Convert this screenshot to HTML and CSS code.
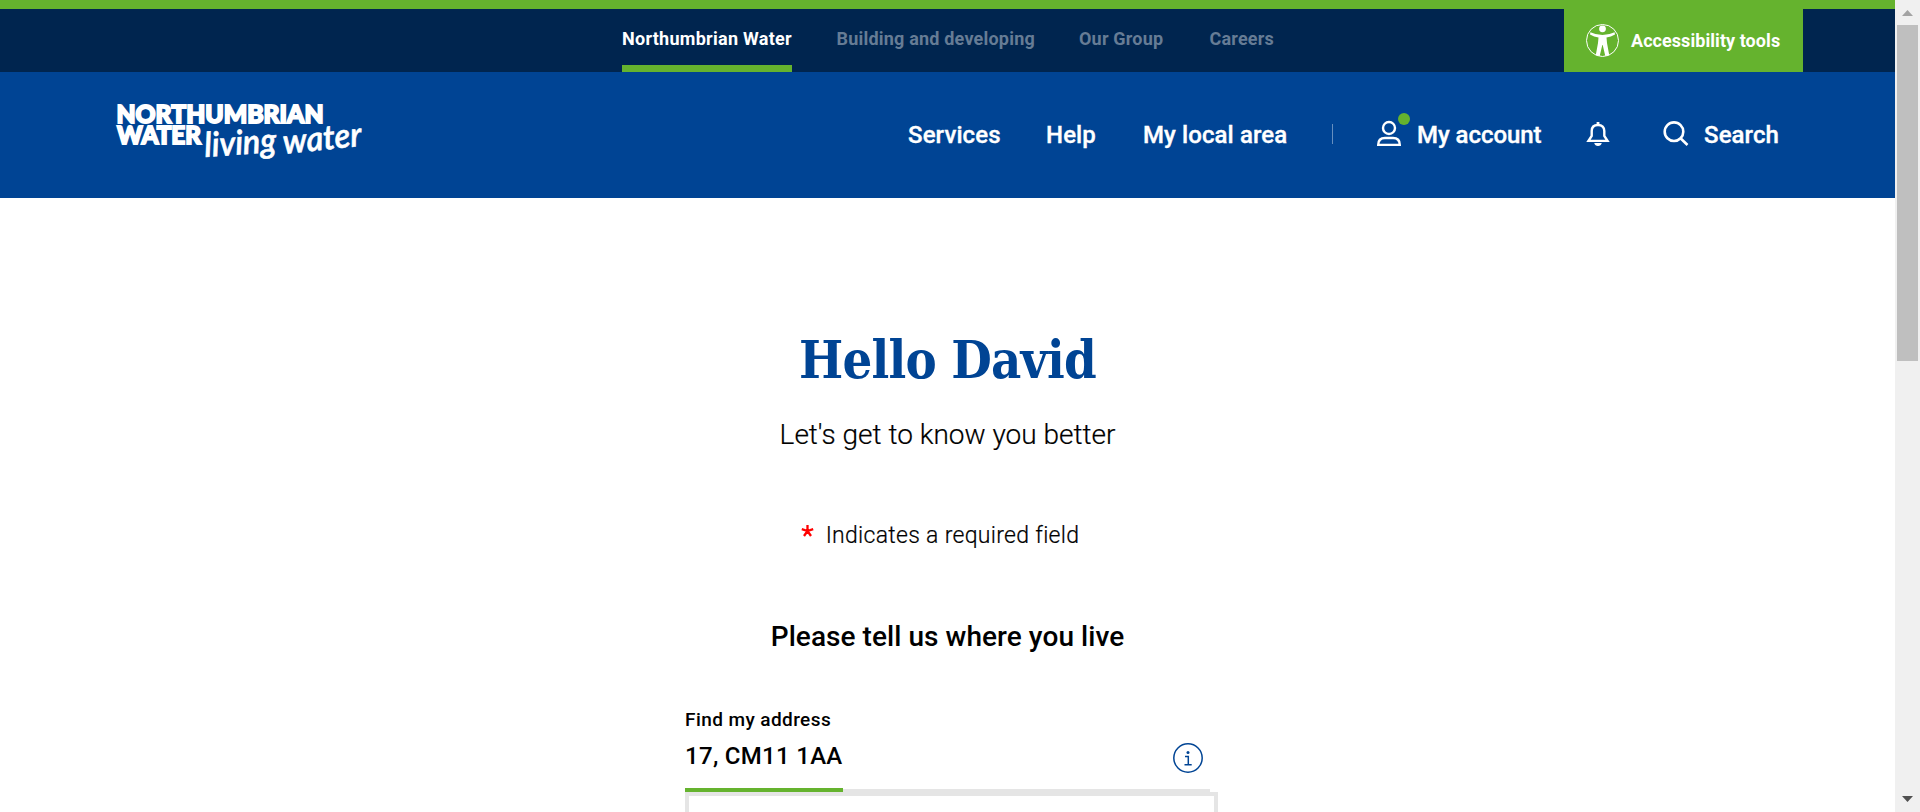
FILE: index.html
```html
<!DOCTYPE html>
<html lang="en">
<head>
<meta charset="utf-8">
<title>Northumbrian Water</title>
<link rel="stylesheet" href="styles.css">
</head>
<body>
<div class="page">
  <header>
    <div class="topbar">
      <nav class="sites">
        <a class="site active">Northumbrian Water</a>
        <a class="site">Building and developing</a>
        <a class="site">Our Group</a>
        <a class="site">Careers</a>
      </nav>
      <a class="access">
        <svg width="33" height="33" viewBox="0 0 33 33"><circle cx="16.5" cy="16.5" r="16" fill="none" stroke="#fff"/><circle cx="16.5" cy="4.8" r="3.4" fill="#fff"/><path fill="#fff" d="M4.4 8.3Q10 11 16.500 11T28.600 8.300L29 10.600Q25 13 20.500 13.500L21 19L23.200 31L19.300 32L16.700 21H16.300L13.700 32L9.800 31L12 19L12.500 13.500Q8 13 4 10.600Z"/></svg>
        <span>Accessibility tools</span>
      </a>
    </div>
    <div class="mainbar">
      <svg class="logo" width="252" height="66" viewBox="0 0 252 66">
        <g fill="#fff" stroke="#fff">
          <text class="mark" x="1.500" y="20" textLength="207" lengthAdjust="spacingAndGlyphs">NORTHUMBRIAN</text>
          <text class="mark" x="2" y="40.500" textLength="84" lengthAdjust="spacingAndGlyphs">WATER</text>
          <text class="script" x="90" y="54" textLength="72" lengthAdjust="spacingAndGlyphs" transform="rotate(-4 90 54)">living</text>
          <text class="script" x="169" y="51" textLength="79" lengthAdjust="spacingAndGlyphs" transform="rotate(-6 169 51)">water</text>
        </g>
      </svg>
      <nav class="menu">
        <a class="m1">Services</a>
        <a class="m2">Help</a>
        <a class="m3">My local area</a>
        <i class="rule"></i>
        <a class="account">
          <svg width="36" height="34" viewBox="0 0 36 34" fill="none" stroke="#fff" stroke-width="2.4"><circle cx="13" cy="16" r="6"/><path d="M2.200 32.900Q2.200 26 9 26H17Q23.800 26 23.800 32.900Z"/><circle cx="28" cy="7" r="6" fill="#65b32e" stroke="none"/></svg>
          <span>My account</span>
        </a>
        <svg class="bell" width="22" height="24" viewBox="0 0 22 24" fill="none" stroke="#fff" stroke-width="2.400"><path d="M1.500 18.900H20.500L17.300 14V9Q17.300 3 11 3T4.700 9V14Z"/><path fill="#fff" stroke="none" d="M9.600 0H12.400V3H9.600ZM7.200 21H14.800Q14 24 11 24T7.200 21Z"/></svg>
        <svg class="lens" width="25" height="25" viewBox="0 0 25 25" fill="none" stroke="#fff" stroke-width="2.600"><circle cx="11" cy="10.700" r="9.300"/><path d="M17.500 17.300L24.500 24"/></svg>
        <a>Search</a>
      </nav>
    </div>
  </header>
  <main>
    <h1>Hello David</h1>
    <p class="lead">Let's get to know you better</p>
    <p class="required"><svg width="13" height="12" viewBox="0 0 13 12" stroke="red" stroke-width="2.300"><path d="M6.500 6V0M6.500 6L.8 4.100M6.500 6L12.200 4.100M6.500 6L3 11M6.500 6L10 11"/></svg><span>Indicates a required field</span></p>
    <h2>Please tell us where you live</h2>
    <div class="field">
      <label>Find my address</label>
      <div class="row">
        <div class="value">17, CM11 1AA</div>
        <svg class="info" width="30" height="30" viewBox="0 0 30 30" fill="none" stroke="#004494" stroke-width="1.500"><circle cx="15" cy="15" r="14.200"/><path d="M12 13.500H15.300V21.500M11.500 21.800H18.700"/><circle cx="15" cy="9.500" r="1.500" fill="#004494" stroke="none"/></svg>
      </div>
      <div class="track"><i></i></div>
      <div class="results"></div>
    </div>
  </main>
</div>
<aside class="scrollbar">
  <svg width="11" height="6" viewBox="0 0 11 6"><path fill="#a3a3a3" d="M0 6L5.500 0L11 6Z"/></svg>
  <div class="thumb"></div>
  <svg class="down" width="11" height="6" viewBox="0 0 11 6"><path fill="#505050" d="M0 0L5.500 6L11 0Z"/></svg>
</aside>
</body>
</html>
```
FILE: styles.css
```css
* { box-sizing: border-box; }
body { margin: 0; height: 812px; overflow: hidden; display: flex; background: #fff; color: #000; font-family: Roboto, "Noto Sans", sans-serif; }
a, span, label { white-space: nowrap; }
svg { display: block; flex: none; overflow: visible; }
.page { width: 1895px; height: 812px; overflow: hidden; }
.topbar { height: 72px; border-top: 9px solid #65b32e; background: #00254f; display: flex; justify-content: space-between; padding: 0 92px 0 622px; }
.sites { display: flex; gap: 44.5px; font-size: 18px; font-weight: 700; line-height: 59px; letter-spacing: .2px; color: #667c95; }
.site { height: 63px; }
.site:nth-child(1) { width: 170px; letter-spacing: .28px; }
.site:nth-child(2) { width: 198px; }
.site:nth-child(3) { width: 86px; }
.active { color: #fff; border-bottom: 7px solid #65b32e; }
.access { width: 239px; background: #65b32e; color: #fff; display: flex; gap: 12px; padding: 15px 0 0 22px; font-size: 18px; font-weight: 700; line-height: 34px; letter-spacing: .06px; }
.mainbar { height: 126px; background: #004494; display: flex; padding-left: 115px; color: #fff; }
.logo { margin-top: 31px; }
.mark { font: 900 24.5px Lato, sans-serif; stroke-width: 1.8px; }
.script { font: italic 600 34px Lato, sans-serif; stroke-width: .6px; }
.menu { display: flex; margin-left: 541px; font-size: 24px; font-weight: 500; line-height: 28px; letter-spacing: .1px; padding-top: 49px; -webkit-text-stroke: .35px #fff; }
.m1 { width: 138px; }
.m2 { width: 97px; }
.m3 { width: 189px; }
.rule { width: 1px; height: 20px; margin-top: 3px; background: #668fbf; }
.account { display: flex; margin-left: 43px; width: 211px; letter-spacing: -.05px; }
.account svg { margin: -9px 5px 0 0; }
.bell { margin-top: 1px; }
.lens { margin: 0 16px 0 54px; }
main { display: flex; flex-direction: column; align-items: center; padding-top: 130px; }
h1, h2, p { margin: 0; }
h1 { font: 700 52px/64px "DejaVu Serif Condensed", "DejaVu Serif", serif; letter-spacing: -.8px; color: #004494; height: 83px; }
.lead { font-size: 28px; font-weight: 300; line-height: 48px; height: 101px; -webkit-text-stroke: .2px #000; }
.required { display: flex; gap: 12px; font-size: 23px; font-weight: 300; line-height: 48px; letter-spacing: .3px; height: 100px; margin-right: 15px; -webkit-text-stroke: .2px #000; }
.required svg { margin-top: 13px; }
h2 { font-size: 28px; font-weight: 500; line-height: 50px; letter-spacing: .06px; height: 95px; }
.field { width: 533px; margin-left: 8px; }
label { display: block; font-size: 19px; font-weight: 500; line-height: 26px; letter-spacing: .42px; }
.row { display: flex; justify-content: space-between; height: 55px; padding-right: 15.5px; }
.value { font-size: 24px; font-weight: 500; line-height: 46px; letter-spacing: .3px; white-space: nowrap; }
.info { margin-top: 10px; }
.track { height: 4px; width: 525px; background: linear-gradient(#fff 1px, #e5e5e5 1px); }
.track i { display: block; width: 158px; height: 4px; background: #65b32e; }
.results { height: 40px; border: 4px solid #e5e5e5; }
.scrollbar { width: 25px; height: 812px; background: #f0f0f0; display: flex; flex-direction: column; align-items: center; padding-top: 10px; }
.thumb { width: 21px; height: 336px; margin-top: 9px; background: #bfbfbf; }
.down { margin-top: 435px; }
```
